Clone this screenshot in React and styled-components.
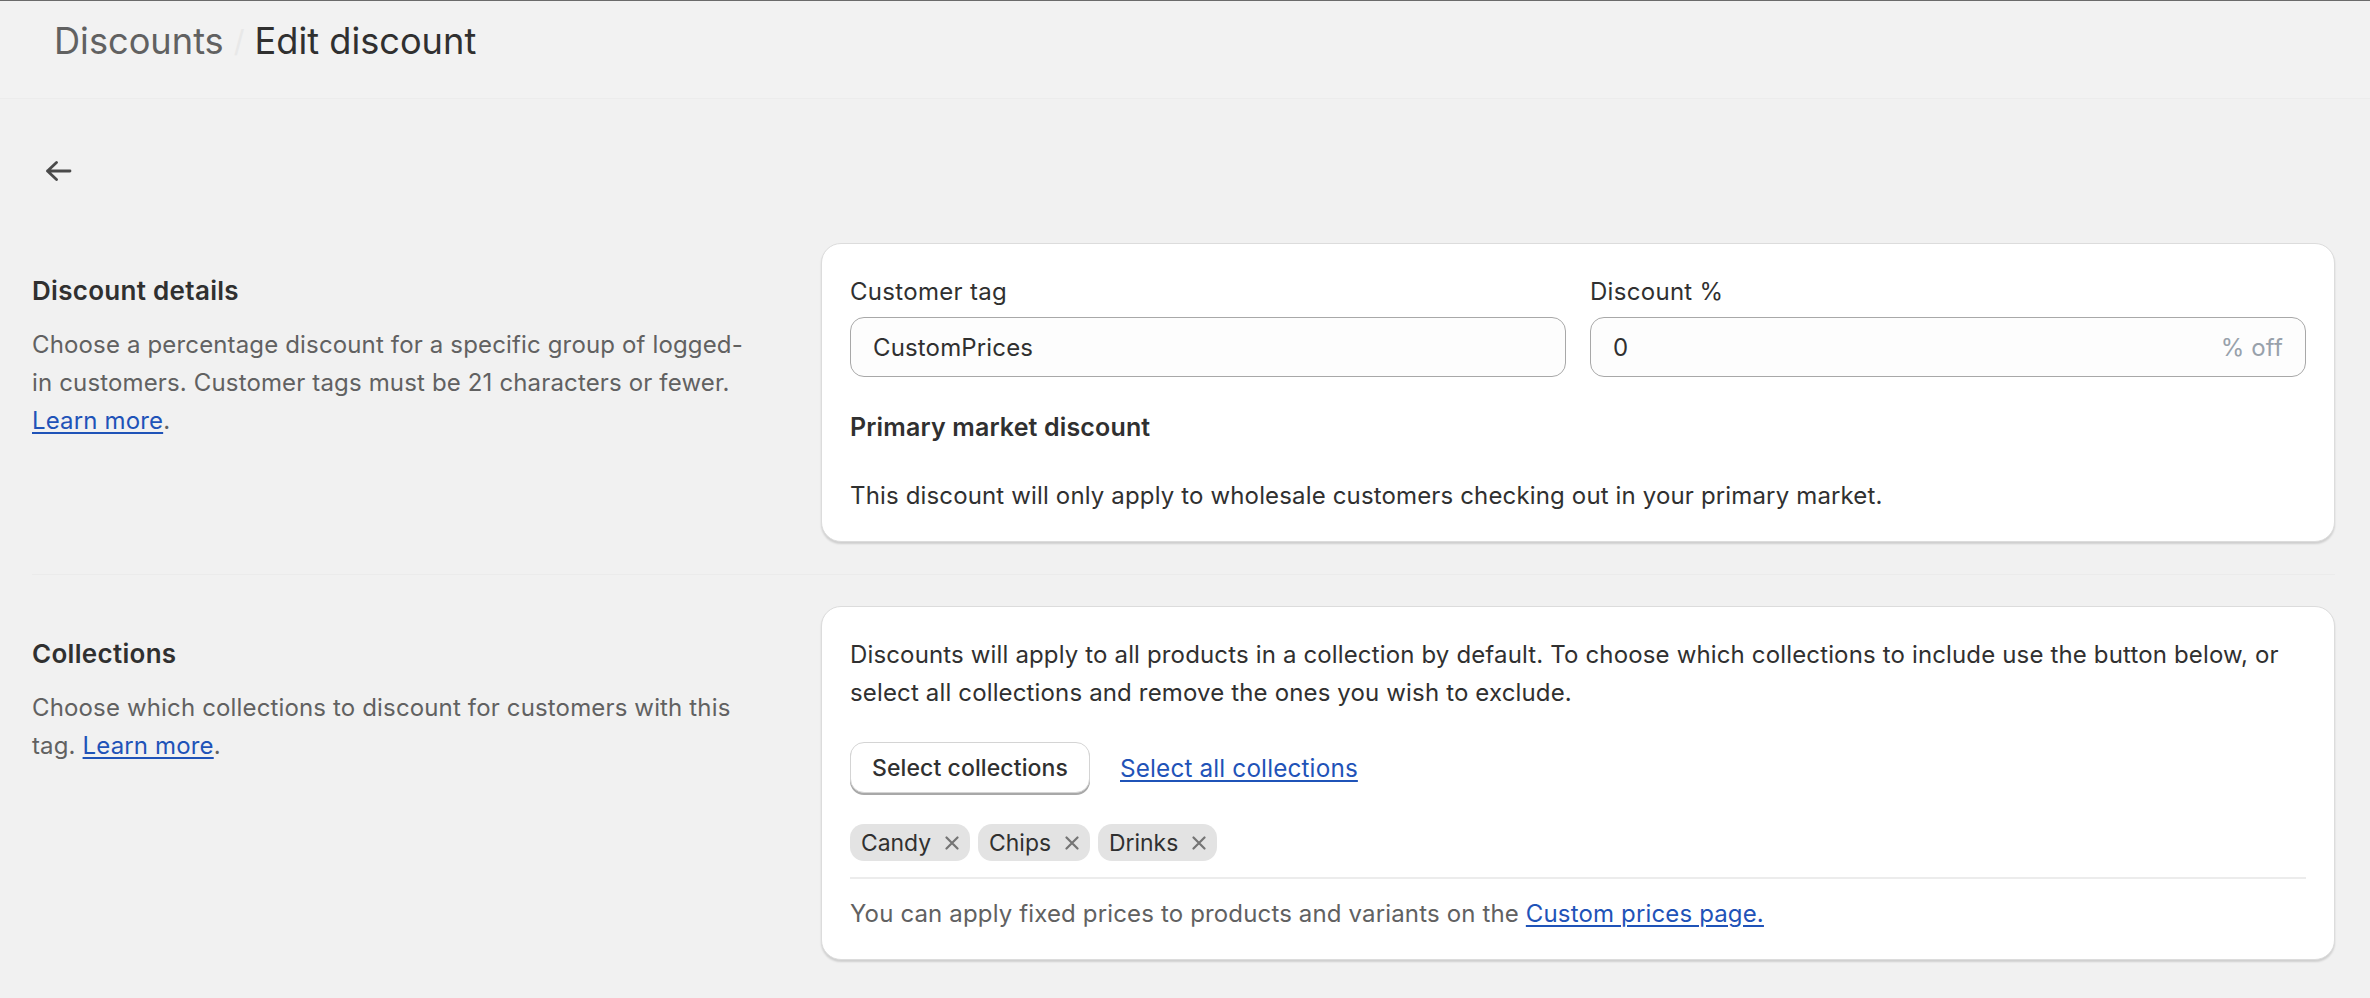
import React from "react";
import styled, { createGlobalStyle } from "styled-components";

const Global = createGlobalStyle`
  html, body { margin: 0; padding: 0; background: #f1f1f1; }
  body { font-family: Inter, "Liberation Sans", sans-serif; color: #303030; overflow: hidden; }
  * { box-sizing: border-box; }
`;

const Page = styled.div`
  width: 2370px;
  height: 998px;
  background: #f1f1f1;
  border-top: 1px solid #6b6b6b;
  overflow: hidden;
`;

const Header = styled.header`
  height: 98px;
  padding: 0 0 18px 54px;
  display: flex;
  align-items: center;
  gap: 10px;
  background: #f2f2f2;
  border-bottom: 1px solid #ececec;
  font-size: 36.2px;
  line-height: 50px;
`;

const Crumb = styled.span`
  color: ${(p) => (p.$current ? "#303030" : "#616161")};
`;

const Slash = styled.span`
  color: #e8e8e8;
  font-size: 30px;
`;

const Main = styled.main`
  padding: 0 35px 0 32px;
`;

const BackRow = styled.div`
  display: flex;
  align-items: center;
  height: 24px;
  margin: 60px 0 60px 14px;
  color: #4a4a4a;
`;

const Section = styled.section`
  display: grid;
  grid-template-columns: 789px 1514px;
  padding: ${(p) => (p.$first ? "0 0 32px" : "31px 0 0")};
  border-top: ${(p) => (p.$first ? "none" : "1px solid #ebebeb")};
`;

const Aside = styled.div`
  padding-top: 29px;
`;

const AsideTitle = styled.h2`
  margin: 0 0 16px;
  font-size: 26px;
  line-height: 38px;
  font-weight: 600;
  letter-spacing: 0.3px;
  color: #303030;
`;

const AsideText = styled.p`
  margin: 0;
  width: 720px;
  font-size: 24px;
  line-height: 38px;
  letter-spacing: 0.15px;
  color: #616161;
`;

const Link = styled.a`
  color: #1f53b8;
  text-decoration: underline;
  text-underline-offset: 3px;
  cursor: pointer;
`;

const Card = styled.div`
  background: #fff;
  border: 1px solid #dcdcdc;
  border-radius: 20px;
  padding: ${(p) => p.$pad};
  box-shadow: 0 2px 2px rgba(0, 0, 0, 0.14);
`;

const Fields = styled.div`
  display: flex;
  gap: 24px;
`;

const Field = styled.div`
  flex: 1 1 0;
  min-width: 0;
`;

const Label = styled.div`
  font-size: 24px;
  line-height: 30px;
  letter-spacing: 0.3px;
  margin-bottom: 10px;
`;

const InputBox = styled.div`
  height: 60px;
  display: flex;
  align-items: center;
  justify-content: space-between;
  padding: 0 22px;
  background: #fdfdfd;
  border: 1.5px solid #a8a8a8;
  border-radius: 14px;
  font-size: 24px;
  letter-spacing: 0.15px;
`;

const Suffix = styled.span`
  color: #98a1ab;
`;

const Strong = styled.div`
  margin-top: 31px;
  font-size: 25px;
  line-height: 38px;
  font-weight: 600;
  letter-spacing: 0.15px;
`;

const Body = styled.p`
  margin: ${(p) => p.$margin || "0"};
  font-size: 24px;
  line-height: 38px;
  letter-spacing: 0.15px;
  color: #303030;
`;

const Actions = styled.div`
  display: flex;
  align-items: center;
  gap: 30px;
  margin-top: 30px;
`;

const Button = styled.button`
  height: 51px;
  width: 240px;
  padding: 0;
  background: #fff;
  border: 1px solid #d4d4d4;
  border-radius: 14px;
  box-shadow: 0 2px 0 #a8a8a8;
  font-family: inherit;
  font-size: 23px;
  font-weight: 500;
  letter-spacing: 0.1px;
  color: #303030;
`;

const ActionLink = styled(Link)`
  font-size: 24.3px;
  letter-spacing: 0.15px;
`;

const Chips = styled.div`
  display: flex;
  gap: 8px;
  margin-top: 31px;
  padding-bottom: 16px;
  border-bottom: 2px solid #ececec;
`;

const Chip = styled.span`
  height: 37px;
  display: inline-flex;
  align-items: center;
  gap: 14px;
  padding: 0 11px;
  background: #e3e3e3;
  border-radius: 14px;
  font-size: 22.9px;
  color: #303030;
`;

const ChipX = styled.svg`
  width: 14px;
  height: 14px;
  color: #757575;
`;

const Footer = styled.p`
  margin: 16px 0 0;
  font-size: 24px;
  line-height: 38px;
  letter-spacing: 0.15px;
  color: #616161;
`;

const Close = () => (
  <ChipX viewBox="0 0 14 14" fill="none" stroke="currentColor" strokeWidth="2.2" strokeLinecap="round">
    <path d="M1.5 1.5l11 11M12.5 1.5l-11 11" />
  </ChipX>
);

const BackArrow = () => (
  <svg width="26" height="20" viewBox="0 0 26 20" fill="none" stroke="currentColor" strokeWidth="2.8" strokeLinecap="round" strokeLinejoin="round">
    <path d="M1.5 10h22.5M1.5 10l9-8.5M1.5 10l9 8.5" />
  </svg>
);

export default function App() {
  return (
    <>
      <Global />
      <Page>
        <Header>
          <Crumb>Discounts</Crumb>
          <Slash>/</Slash>
          <Crumb $current>Edit discount</Crumb>
        </Header>
        <Main>
          <BackRow>
            <BackArrow />
          </BackRow>
          <Section $first>
            <Aside>
              <AsideTitle>Discount details</AsideTitle>
              <AsideText>
                Choose a percentage discount for a specific group of logged-in customers. Customer tags must be 21 characters or fewer.{" "}
                <Link>Learn more</Link>.
              </AsideText>
            </Aside>
            <Card $pad="33px 28px 26px 28px">
              <Fields>
                <Field>
                  <Label>Customer tag</Label>
                  <InputBox>CustomPrices</InputBox>
                </Field>
                <Field>
                  <Label>Discount %</Label>
                  <InputBox>
                    0<Suffix>% off</Suffix>
                  </InputBox>
                </Field>
              </Fields>
              <Strong>Primary market discount</Strong>
              <Body $margin="31px 0 0">This discount will only apply to wholesale customers checking out in your primary market.</Body>
            </Card>
          </Section>
          <Section>
            <Aside>
              <AsideTitle>Collections</AsideTitle>
              <AsideText>
                Choose which collections to discount for customers with this tag. <Link>Learn more</Link>.
              </AsideText>
            </Aside>
            <Card $pad="29px 28px 26px 28px">
              <Body>
                Discounts will apply to all products in a collection by default. To choose which collections to include use the button below, or select all collections and remove the ones you wish to exclude.
              </Body>
              <Actions>
                <Button>Select collections</Button>
                <ActionLink>Select all collections</ActionLink>
              </Actions>
              <Chips>
                <Chip>Candy<Close /></Chip>
                <Chip>Chips<Close /></Chip>
                <Chip>Drinks<Close /></Chip>
              </Chips>
              <Footer>
                You can apply fixed prices to products and variants on the <Link>Custom prices page.</Link>
              </Footer>
            </Card>
          </Section>
        </Main>
      </Page>
    </>
  );
}
